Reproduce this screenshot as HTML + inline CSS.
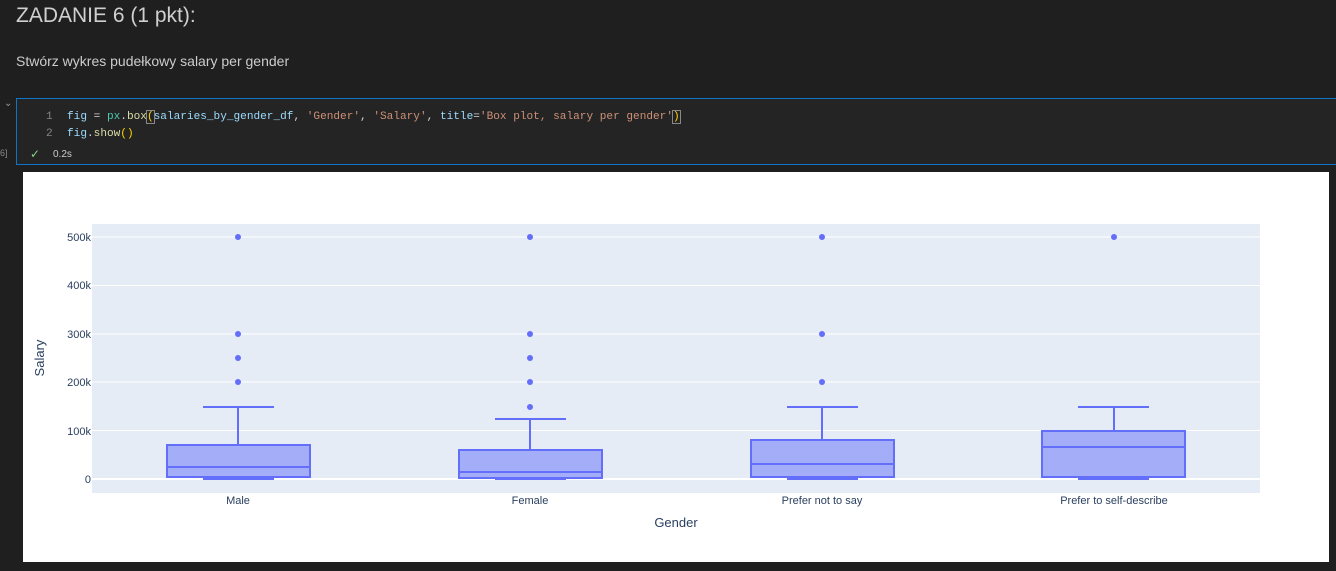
<!DOCTYPE html>
<html><head><meta charset="utf-8"><style>
body{margin:0;width:1336px;height:571px;background:#1f1f1f;overflow:hidden;font-family:"Segoe UI","Liberation Sans",sans-serif;position:relative}
.t{position:absolute;color:#cccccc}
.cell{position:absolute;left:16px;top:98px;width:1320px;height:67px;border:1px solid #0e74c8;border-right:none;box-sizing:border-box;background:#242424}
.code{position:absolute;font-family:"Liberation Mono",monospace;font-size:11.1px;white-space:pre;color:#d4d4d4}
</style></head><body>
<div class="t" style="left:16px;top:4px;font-size:21px;color:#d0d0d0">ZADANIE 6 (1 pkt):</div>
<div class="t" style="left:16px;top:53px;font-size:14px">Stwórz wykres pudełkowy salary per gender</div>
<div class="t" style="left:4px;top:98px;font-size:10px;color:#999">⌄</div>
<div class="t" style="left:0;top:148px;font-size:9px;color:#888">6]</div>
<div class="cell"></div>
<div class="code" style="left:46px;top:111px;color:#858585">1</div>
<div class="code" style="left:46px;top:128px;color:#858585">2</div>
<div class="code" style="left:67px;top:111px"><span style="color:#9cdcfe">fig</span> = <span style="color:#4ec9b0">px</span>.<span style="color:#dcdcaa">box</span><span style="color:#ffd700;outline:1px solid #888">(</span><span style="color:#9cdcfe">salaries_by_gender_df</span>, <span style="color:#ce9178">'Gender'</span>, <span style="color:#ce9178">'Salary'</span>, <span style="color:#9cdcfe">title</span>=<span style="color:#ce9178">'Box plot, salary per gender'</span><span style="color:#ffd700;outline:1px solid #888">)</span></div>
<div class="code" style="left:67px;top:128px"><span style="color:#9cdcfe">fig</span>.<span style="color:#dcdcaa">show</span><span style="color:#ffd700">()</span></div>
<div class="t" style="left:30px;top:147px;font-size:12px;color:#89d185">✓</div>
<div class="t" style="left:53px;top:149px;font-size:10px">0.2s</div>
<svg style="position:absolute;left:23px;top:172px" width="1306" height="390" viewBox="23 172 1306 390" font-family="Liberation Sans,sans-serif">
<rect x="23" y="172" width="1306" height="390" fill="#fff"/>
<rect x="92" y="224" width="1168" height="269" fill="#e5ecf6"/>
<g stroke="#fff" stroke-width="1">
<line x1="92" x2="1260" y1="237" y2="237"/><line x1="92" x2="1260" y1="285.5" y2="285.5"/><line x1="92" x2="1260" y1="334" y2="334"/><line x1="92" x2="1260" y1="382" y2="382"/><line x1="92" x2="1260" y1="430.5" y2="430.5"/>
</g>
<line x1="92" x2="1260" y1="479" y2="479" stroke="#fff" stroke-width="2"/>
<g font-size="11" fill="#2a3f5f" text-anchor="end">
<text x="91" y="241">500k</text><text x="91" y="289">400k</text><text x="91" y="338">300k</text><text x="91" y="386">200k</text><text x="91" y="435">100k</text><text x="91" y="483">0</text>
</g>
<g font-size="11" fill="#2a3f5f" text-anchor="middle">
<text x="238" y="504">Male</text><text x="530" y="504">Female</text><text x="822" y="504">Prefer not to say</text><text x="1114" y="504">Prefer to self-describe</text>
<text x="676" y="527" font-size="13">Gender</text>
</g>
<text x="44" y="358" font-size="13" fill="#2a3f5f" text-anchor="middle" transform="rotate(-90 44 358)">Salary</text>
<g stroke="#636efa" stroke-width="2" fill="rgba(99,110,250,0.5)">
<rect x="167" y="445" width="143" height="32"/><line x1="167" x2="310" y1="467" y2="467"/><line x1="238" x2="238" y1="445" y2="407"/><line x1="203" x2="274" y1="407" y2="407"/><line x1="203" x2="274" y1="479" y2="479"/>
<rect x="459" y="450" width="143" height="28"/><line x1="459" x2="602" y1="472" y2="472"/><line x1="530" x2="530" y1="450" y2="419"/><line x1="495" x2="566" y1="419" y2="419"/><line x1="495" x2="566" y1="479" y2="479"/>
<rect x="751" y="440" width="143" height="37"/><line x1="751" x2="894" y1="464" y2="464"/><line x1="822" x2="822" y1="440" y2="407"/><line x1="787" x2="858" y1="407" y2="407"/><line x1="787" x2="858" y1="479" y2="479"/>
<rect x="1042" y="431" width="143" height="46"/><line x1="1042" x2="1185" y1="447" y2="447"/><line x1="1114" x2="1114" y1="431" y2="407"/><line x1="1078" x2="1149" y1="407" y2="407"/><line x1="1078" x2="1149" y1="479" y2="479"/>
</g>
<g fill="#636efa">
<circle cx="238" cy="237" r="3"/><circle cx="238" cy="334" r="3"/><circle cx="238" cy="358" r="3"/><circle cx="238" cy="382" r="3"/>
<circle cx="530" cy="237" r="3"/><circle cx="530" cy="334" r="3"/><circle cx="530" cy="358" r="3"/><circle cx="530" cy="382" r="3"/><circle cx="530" cy="407" r="3"/>
<circle cx="822" cy="237" r="3"/><circle cx="822" cy="334" r="3"/><circle cx="822" cy="382" r="3"/>
<circle cx="1114" cy="237" r="3"/>
</g>
</svg>
</body></html>
